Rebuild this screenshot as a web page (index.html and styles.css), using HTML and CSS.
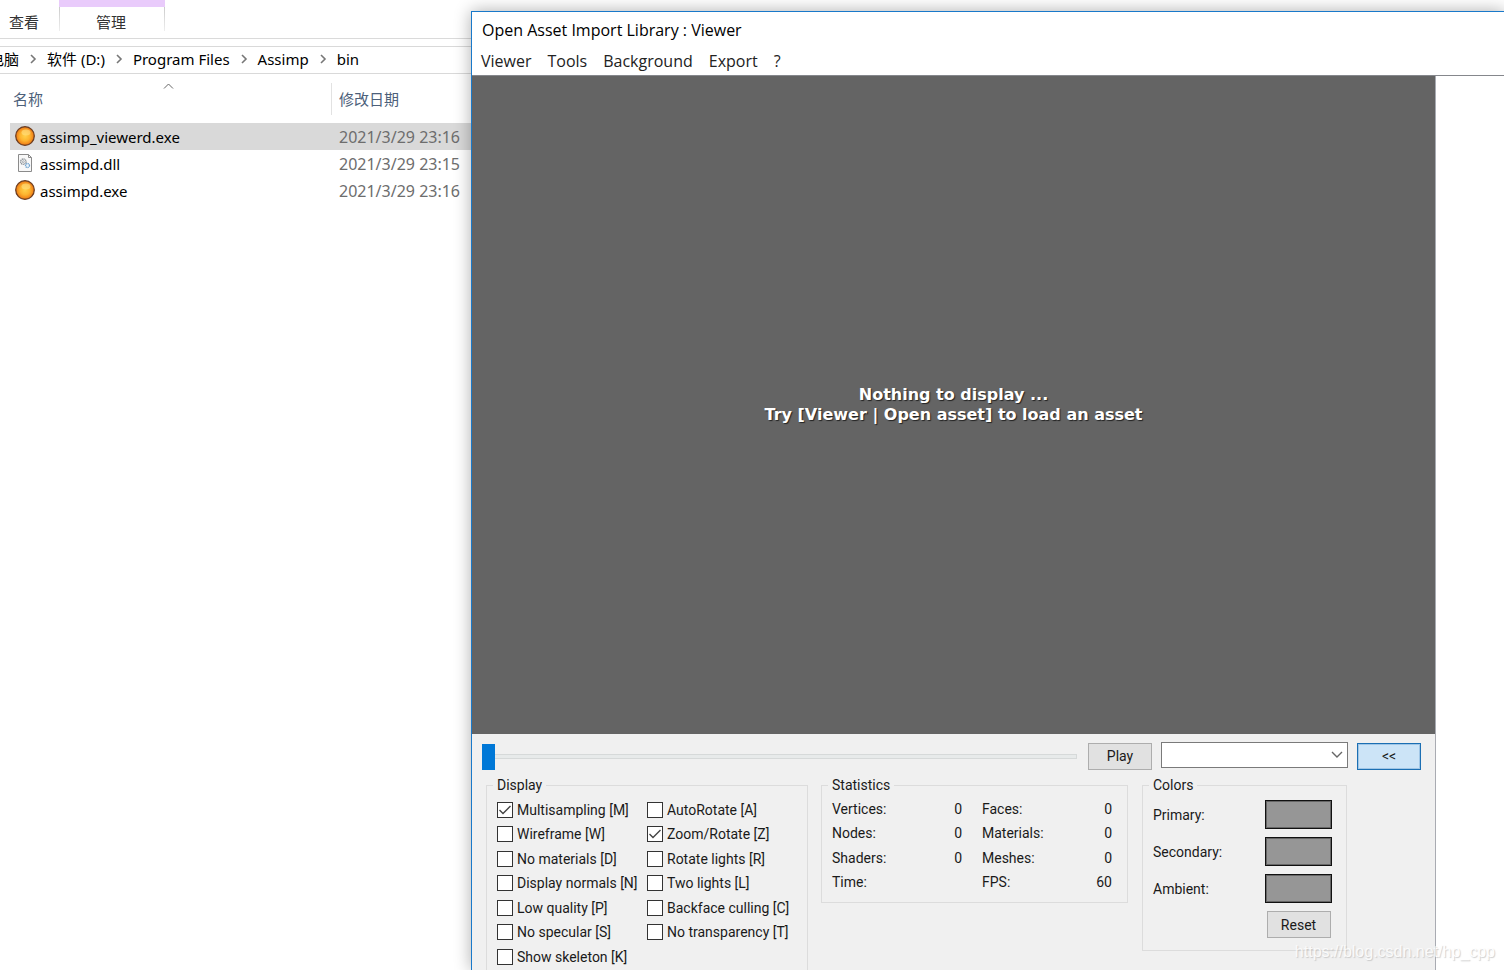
FILE: index.html
```html
<!DOCTYPE html>
<html lang="zh-CN">
<head>
<meta charset="utf-8">
<title>Open Asset Import Library : Viewer</title>
<link rel="stylesheet" href="styles.css">
</head>
<body>
<svg class="defs" aria-hidden="true">
  <defs>
    <radialGradient id="orb" cx="50%" cy="50%" r="52%">
      <stop offset="0" stop-color="#ffd04a"/>
      <stop offset=".5" stop-color="#fdb42f"/>
      <stop offset=".82" stop-color="#f28a1c"/>
      <stop offset="1" stop-color="#c05a0c"/>
    </radialGradient>
    <symbol id="i-exe" viewBox="0 0 20 20">
      <circle cx="10" cy="10" r="9.3" fill="url(#orb)" stroke="#6a3c20" stroke-width="1.200"/>
      <ellipse cx="11" cy="6.5" rx="4.5" ry="3" fill="#ffe48a" opacity=".55"/>
    </symbol>
    <symbol id="i-dll" viewBox="0 0 20 20">
      <path d="M3.5 1.5h10l3 3v14h-13z" fill="#f8f8f8" stroke="#8b8b8b"/>
      <path d="M13.500 1.500v3h3" fill="none" stroke="#8b8b8b"/>
      <circle cx="8.300" cy="8.700" r="2.700" fill="none" stroke="#8a9096" stroke-width="1.400" stroke-dasharray="1.200 .6"/>
      <circle cx="8.300" cy="8.700" r="1" fill="none" stroke="#8a9096" stroke-width=".7"/>
      <circle cx="12.500" cy="12.500" r="2" fill="#eef6fc" stroke="#74a5cf" stroke-width="1.300" stroke-dasharray="1.200 .5"/>
    </symbol>
    <symbol id="i-next" viewBox="0 0 28 12">
      <path d="M12 2l4 4-4 4" fill="none" stroke="#777" stroke-width="1.600"/>
    </symbol>
  </defs>
</svg>

<main class="explorer">
  <nav class="ribbon">
    <button class="tab" type="button">查看</button>
    <button class="tab tab-context" type="button">管理</button>
  </nav>
  <nav class="address">
    <a href="#">电脑</a>
    <svg class="next"><use href="#i-next"/></svg>
    <a href="#">软件 (D:)</a>
    <svg class="next"><use href="#i-next"/></svg>
    <a href="#">Program Files</a>
    <svg class="next"><use href="#i-next"/></svg>
    <a href="#">Assimp</a>
    <svg class="next"><use href="#i-next"/></svg>
    <a href="#">bin</a>
  </nav>
  <table class="files">
    <thead>
      <tr>
        <th class="col-name">名称<svg class="sort" viewBox="0 0 11 6"><path d="M1 5.500l4.500-4.500 4.500 4.500" fill="none" stroke="#666"/></svg></th>
        <th class="col-date"><span>修改日期</span></th>
      </tr>
    </thead>
    <tbody>
      <tr class="selected"><td><span class="file"><svg class="icon"><use href="#i-exe"/></svg>assimp_viewerd.exe</span></td><td class="date">2021/3/29 23:16</td></tr>
      <tr><td><span class="file"><svg class="icon"><use href="#i-dll"/></svg>assimpd.dll</span></td><td class="date">2021/3/29 23:15</td></tr>
      <tr><td><span class="file"><svg class="icon"><use href="#i-exe"/></svg>assimpd.exe</span></td><td class="date">2021/3/29 23:16</td></tr>
    </tbody>
  </table>
</main>

<section class="window">
  <h1 class="title">Open Asset Import Library : Viewer</h1>
  <nav class="menu">
    <button type="button">Viewer</button>
    <button type="button">Tools</button>
    <button type="button">Background</button>
    <button type="button">Export</button>
    <button type="button">?</button>
  </nav>
  <div class="client">
    <div class="viewer">
      <div class="canvas">
        <p>Nothing to display ...<br>Try [Viewer | Open asset] to load an asset</p>
      </div>
      <div class="panel">
        <div class="controls">
          <input class="slider" type="range" min="0" max="100" value="0" aria-label="Animation position">
          <button class="btn" type="button">Play</button>
          <select class="combo" aria-label="Animation"><option></option></select>
          <button class="btn btn-active" type="button">&lt;&lt;</button>
        </div>
        <div class="groups">
          <fieldset class="group display">
            <legend>Display</legend>
            <div class="checks">
              <label><input type="checkbox" checked>Multisampling [M]</label>
              <label><input type="checkbox">Wireframe [W]</label>
              <label><input type="checkbox">No materials [D]</label>
              <label><input type="checkbox">Display normals [N]</label>
              <label><input type="checkbox">Low quality [P]</label>
              <label><input type="checkbox">No specular [S]</label>
              <label><input type="checkbox">Show skeleton [K]</label>
              <label><input type="checkbox">AutoRotate [A]</label>
              <label><input type="checkbox" checked>Zoom/Rotate [Z]</label>
              <label><input type="checkbox">Rotate lights [R]</label>
              <label><input type="checkbox">Two lights [L]</label>
              <label><input type="checkbox">Backface culling [C]</label>
              <label><input type="checkbox">No transparency [T]</label>
            </div>
          </fieldset>
          <fieldset class="group statistics">
            <legend>Statistics</legend>
            <table class="stats">
              <tr><th>Vertices:</th><td>0</td><th>Faces:</th><td>0</td></tr>
              <tr><th>Nodes:</th><td>0</td><th>Materials:</th><td>0</td></tr>
              <tr><th>Shaders:</th><td>0</td><th>Meshes:</th><td>0</td></tr>
              <tr><th>Time:</th><td></td><th>FPS:</th><td>60</td></tr>
            </table>
          </fieldset>
          <fieldset class="group colors">
            <legend>Colors</legend>
            <div class="swatches">
              <label for="c1">Primary:</label><button class="swatch" id="c1" type="button"></button>
              <label for="c2">Secondary:</label><button class="swatch" id="c2" type="button"></button>
              <label for="c3">Ambient:</label><button class="swatch" id="c3" type="button"></button>
              <button class="btn reset" type="button">Reset</button>
            </div>
          </fieldset>
        </div>
      </div>
    </div>
    <div class="blank"></div>
  </div>
</section>
<div class="watermark">https://blog.csdn.net/hp_cpp</div>
</body>
</html>
```

FILE: styles.css
```css
* { box-sizing: border-box; }

body {
  margin: 0;
  height: 100vh;
  position: relative;
  overflow: hidden;
  background: #fff;
  color: #000;
  font: 15px/20px "Noto Sans", "Noto Sans CJK SC", sans-serif;
}

button, input, select { font: inherit; color: inherit; margin: 0; }
.defs { position: absolute; width: 0; height: 0; }

/* File explorer */
.ribbon {
  display: flex;
  height: 39px;
  border-bottom: 1px solid #dadada;
}
.tab {
  width: 59px;
  height: 31px;
  padding: 13px 0 0 9px;
  border: 0;
  background: none;
  color: #333;
  font-size: 15px;
  line-height: 18px;
  text-align: left;
}
.tab-context {
  width: 106px;
  padding: 6px 2px 0 0;
  border-style: solid;
  border-width: 7px 1px 0;
  border-color: #e9cbfb;
  border-image: linear-gradient(#e9cbfb 7px, #ccc 7px, #eee) 7 1 0;
  text-align: center;
}
.address {
  display: flex;
  align-items: center;
  height: 28px;
  margin-top: 7px;
  padding-bottom: 2px;
  border: solid #d9d9d9;
  border-width: 1px 0;
}
.address a { color: #000; text-decoration: none; white-space: nowrap; }
.address a:first-child { margin-left: -11px; }
.next { flex: none; width: 28px; height: 12px; }

.files {
  width: calc(100% - 10px);
  margin-left: 10px;
  border-collapse: collapse;
  table-layout: fixed;
}
.files th {
  position: relative;
  height: 49px;
  padding: 0 0 0 3px;
  color: #4c607a;
  font-weight: 400;
  text-align: left;
}
.files .col-name { width: 321px; }
.files .col-date { padding-left: 0; }
.col-date span {
  display: block;
  padding: 6px 0 6px 7px;
  border-left: 1px solid #e2e2e2;
}
.sort { position: absolute; top: 9px; left: 153px; width: 11px; height: 6px; }
.files td { height: 27px; padding: 0; }
.files .selected { background: #d9d9d9; }
.files .date { padding-left: 8px; color: #6d6d6d; font-size: 16px; }
.file { display: flex; align-items: center; gap: 5px; padding-left: 5px; }
.icon { width: 20px; height: 20px; margin-bottom: 2px; }

/* Viewer window */
.window {
  position: absolute;
  inset: 11px -1px 0 471px;
  display: flex;
  flex-direction: column;
  border: solid #1979ca;
  border-width: 1px 0 0 1px;
  background: #fff;
  box-shadow: 0 0 16px rgba(0, 0, 0, .32);
  font-family: "Open Sans", "Noto Sans", sans-serif;
  font-size: 16px;
}
.title {
  margin: 0;
  padding: 8px 10px 9px;
  font-size: 16px;
  font-weight: 400;
  line-height: 20px;
}
.menu { display: flex; gap: 16px; padding: 2px 9px 4px; }
.menu button {
  padding: 0;
  border: 0;
  background: none;
  color: #222;
  line-height: 20px;
}
.client {
  display: flex;
  flex: 1;
  min-height: 0;
  border-top: 1px solid #85878c;
}
.viewer {
  display: flex;
  flex: 1;
  flex-direction: column;
  min-width: 0;
  border-right: 1px solid #a9abb2;
}
.blank { width: 69px; }
.canvas {
  display: flex;
  flex: 1;
  align-items: center;
  justify-content: center;
  background: #646464;
}
.canvas p {
  margin: 0;
  color: #fff;
  font: bold 16px/20px "DejaVu Sans", sans-serif;
  text-align: center;
  text-shadow: 1px 1px 1px #222;
}
.panel {
  padding: 8px 14px 0 10px;
  background: #f0f0f0;
  font: 14px/16px Roboto, "Liberation Sans", sans-serif;
  color: #1a1a1a;
}
.controls { display: flex; align-items: center; gap: 9px; height: 28px; }

.slider {
  flex: 1;
  min-width: 0;
  height: 26px;
  margin-right: 2px;
  appearance: none;
  background: none;
}
.slider::-webkit-slider-runnable-track {
  height: 5px;
  border: 1px solid #d6d9d9;
  background: #e7eaea;
}
.slider::-webkit-slider-thumb {
  appearance: none;
  width: 13px;
  height: 26px;
  margin-top: -11px;
  margin-left: -1px;
  background: #0078d7;
}
.btn {
  width: 64px;
  height: 27px;
  padding: 0;
  border: 1px solid #adadad;
  background: #e1e1e1;
}
.btn-active { border-color: #1c6fb3; background: #cce4f7; box-shadow: inset 0 0 0 1px #a0c6e6; }
.combo {
  width: 187px;
  height: 26px;
  align-self: flex-start;
  border: 1px solid #7a7a7a;
  border-radius: 0;
  appearance: none;
  background: #fff url("data:image/svg+xml,%3Csvg xmlns='http://www.w3.org/2000/svg' width='12' height='8'%3E%3Cpath d='M1 1l5 5 5-5' fill='none' stroke='%23666' stroke-width='1.400'/%3E%3C/svg%3E") no-repeat right 4px center;
}

.groups { display: flex; align-items: flex-start; margin-top: 7px; padding-left: 4px; }
.group { flex: none; min-width: 0; margin: 0; border: 1px solid #dcdcdc; }
.group legend { margin-left: -4px; padding: 0 4px; }
.display { width: 322px; padding: 4px 10px 1px; border-bottom: 0; }
.checks {
  display: grid;
  grid-template-columns: 150px 1fr;
  grid-template-rows: repeat(3, 25px 24px) 25px;
  grid-auto-flow: column;
}
.checks label { display: flex; align-items: center; gap: 4px; white-space: nowrap; }
.checks input {
  flex: none;
  width: 16px;
  height: 16px;
  border: 1px solid #333;
  appearance: none;
  background: #fff;
}
.checks input:checked {
  background: #fff url("data:image/svg+xml,%3Csvg xmlns='http://www.w3.org/2000/svg' width='14' height='14'%3E%3Cpath d='M1.500 7l3.500 3.500 7.500-7.500' fill='none' stroke='%23444' stroke-width='1.400'/%3E%3C/svg%3E") center;
}
.statistics { width: 307px; margin-left: 13px; padding: 3px 15px 8px 10px; }
.stats { width: 100%; border-collapse: collapse; table-layout: fixed; }
.stats th, .stats td { height: 25px; padding: 0; font-weight: 400; text-align: left; }
.stats tr:nth-child(even) td { height: 24px; }
.stats tr:nth-child(even) th { height: 24px; }
.stats td { text-align: right; }
.stats th { width: 80px; }
.stats td + th { width: 100px; padding-left: 20px; }
.colors { width: 205px; margin-left: 14px; padding: 7px 14px 12px 10px; }
.swatches {
  display: grid;
  grid-template-columns: 1fr 67px;
  gap: 8px 0;
  align-items: center;
}
.swatch { height: 29px; border: 1px solid #111; background: #969696; box-shadow: inset 0 0 0 1px #666; }
.reset { grid-column: 2; justify-self: center; }

.watermark {
  position: absolute;
  right: 9px;
  bottom: 8px;
  color: #fff;
  font: 16px/20px "Liberation Sans", sans-serif;
  text-shadow: 1px 1px 1px #bbb;
  opacity: .7;
}
```
